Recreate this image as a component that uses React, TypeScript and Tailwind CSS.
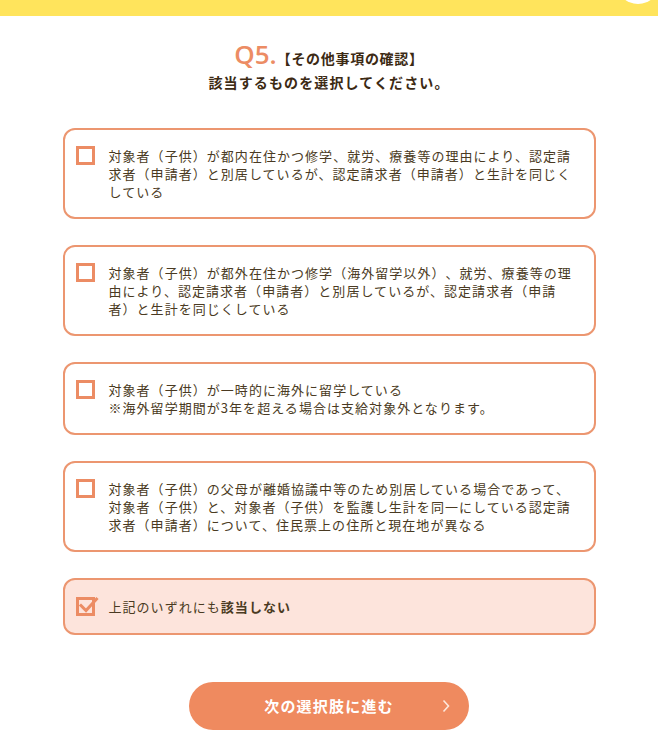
import React from "react";

const options = [
  {
    id: "a",
    lines: "対象者（子供）が都内在住かつ修学、就労、療養等の理由により、認定請求者（申請者）と別居しているが、認定請求者（申請者）と生計を同じくしている",
  },
  {
    id: "b",
    lines: "対象者（子供）が都外在住かつ修学（海外留学以外）、就労、療養等の理由により、認定請求者（申請者）と別居しているが、認定請求者（申請者）と生計を同じくしている",
  },
  {
    id: "c",
    lines: "対象者（子供）が一時的に海外に留学している\n※海外留学期間が3年を超える場合は支給対象外となります。",
  },
  {
    id: "d",
    lines: "対象者（子供）の父母が離婚協議中等のため別居している場合であって、対象者（子供）と、対象者（子供）を監護し生計を同一にしている認定請求者（申請者）について、住民票上の住所と現在地が異なる",
  },
];

function Box({ checked }: { checked?: boolean }) {
  return (
    <svg width="24" height="22" viewBox="0 0 24 22" className="-my-[2px] shrink-0">
      <rect x="1.5" y="2.5" width="16" height="16" fill="none" stroke="#ec8c64" strokeWidth="3" />
      {checked && (
        <path d="M5 9.5L10 14.5L20.5 3" fill="none" stroke="#ec8c64" strokeWidth="3" strokeLinecap="square" />
      )}
    </svg>
  );
}

export default function App() {
  return (
    <div
      className="relative min-h-[744px] overflow-hidden bg-white text-[#4a3a22] [text-spacing-trim:space-all]"
      style={{ fontFamily: '"Noto Sans CJK JP", "Noto Sans", sans-serif' }}
    >
      <div className="h-4 bg-[#ffe45c]" />
      <div className="absolute left-[616px] top-[-40px] h-11 w-11 rounded-full bg-white" />

      <div className="mt-[24px] flex flex-col items-center text-[#3c2a14]">
        <div className="flex items-baseline">
          <span className="text-[26px] leading-7 font-semibold text-[#ec8c64]" style={{ fontFamily: '"Open Sans", sans-serif' }}>
            Q5.
          </span>
          <span className="text-[14px] font-bold tracking-[0.05em]">【その他事項の確認】</span>
        </div>
        <p className="mt-[1px] text-[14px] leading-6 font-bold tracking-[0.08em]">該当するものを選択してください。</p>
      </div>

      <div className="mx-auto mt-[34px] flex w-[533px] flex-col gap-[26px]">
        {options.map((o) => (
          <div key={o.id} className="flex items-start gap-[9px] rounded-xl border-2 border-[#ec9670] bg-white pl-[11px] pr-[14px] pt-[17px] pb-[16px]">
            <Box />
            <p className="w-[472px] whitespace-pre-line text-[13px] leading-[18px] tracking-[0.08em]">{o.lines}</p>
          </div>
        ))}
        <div className="flex items-center gap-[9px] rounded-xl border-2 border-[#ec9670] bg-[#fde4dc] pl-[11px] pr-[14px] pt-[18px] pb-[17px]">
          <Box checked />
          <p className="text-[13px] leading-[18px] tracking-[0.08em]">
            上記のいずれにも<span className="font-bold">該当しない</span>
          </p>
        </div>
      </div>

      <div className="mt-[47px] flex justify-center">
        <button className="relative flex h-12 w-[280px] items-center justify-center rounded-full bg-[#ef8a5f] text-[15px] font-bold tracking-[0.08em] text-white">
          次の選択肢に進む
          <svg width="10" height="14" viewBox="0 0 10 14" className="absolute right-[18px] top-[17px]">
            <path d="M2.5 1.5L7.5 7L2.5 12.5" fill="none" stroke="#fde8dc" strokeWidth="1.6" />
          </svg>
        </button>
      </div>
    </div>
  );
}
